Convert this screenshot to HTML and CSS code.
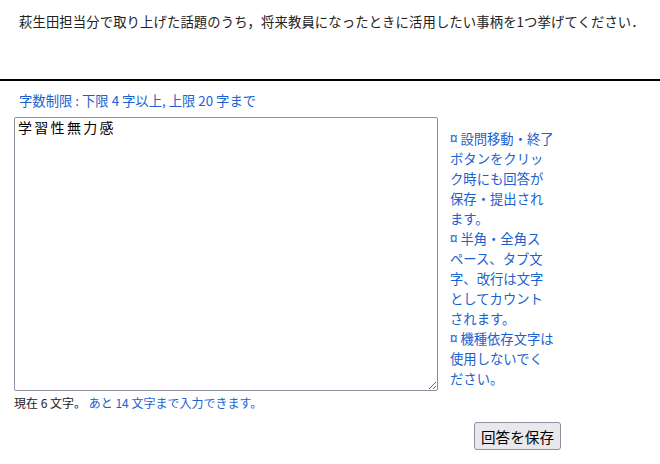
FILE: index.html
```html
<!DOCTYPE html>
<html lang="ja">
<head>
  <meta charset="utf-8">
  <title>回答</title>
  <link rel="stylesheet" href="styles.css">
</head>
<body>
  <div class="question">萩生田担当分で取り上げた話題のうち，将来教員になったときに活用したい事柄を1つ挙げてください．</div>
  <hr class="divider">
  <form class="answer">
    <div class="limit">字数制限 : 下限 4 字以上, 上限 20 字まで</div>
    <div class="answer-row">
      <div class="editor">
        <textarea class="answer-text" name="answer">学習性無力感</textarea>
        <div class="count">現在 6 文字。 <span class="remain">あと 14 文字まで入力できます。</span></div>
      </div>
      <div class="notes">
        <div>¤ 設問移動・終了ボタンをクリック時にも回答が保存・提出されます。</div>
        <div>¤ 半角・全角スペース、タブ文字、改行は文字としてカウントされます。</div>
        <div>¤ 機種依存文字は使用しないでください。</div>
      </div>
    </div>
    <div class="actions">
      <button type="button" class="save">回答を保存</button>
    </div>
  </form>
</body>
</html>
```

FILE: styles.css
```css
/* basic layout */
body {
  margin: 0;
  font-family: "Noto Sans CJK JP", sans-serif;
  font-size: 13.33px;
  color: #222;
}

.question {
  padding: 12px 0 0 19px;
  line-height: 20px;
  height: 67px;
  letter-spacing: 0.12px;
}

.divider {
  margin: 0;
  border: none;
  border-top: 2px solid #000;
}

/* answer area */
.answer {
  padding: 11px 0 0 14px;
}

.limit {
  padding-left: 5px;
  font-size: 13.33px;
  line-height: 18px;
  color: #1a62d0;
}

.answer-row {
  display: flex;
  gap: 12px;
  margin-top: 7px;
}

.answer-text {
  display: block;
  width: 424px;
  height: 274px;
  box-sizing: border-box;
  margin: 0;
  padding: 1px 3px;
  border: 1px solid #8f8f9d;
  border-radius: 2px;
  font-family: "Noto Sans CJK JP", monospace;
  font-size: 14px;
  letter-spacing: 2.3px;
  line-height: 17px;
  color: #000;
}

.count {
  margin-top: 4px;
  font-size: 12px;
  line-height: 16px;
  color: #222;
}

.remain {
  color: #1a62d0;
}

.notes {
  width: 105px;
  margin-top: 12px;
  line-height: 20px;
  line-break: strict;
  color: #1a62d0;
}

/* save button */
.actions {
  padding: 11px 0 0 460px;
}

.save {
  height: 28px;
  padding: 0 6px;
  border: 1px solid #8f8f9d;
  border-radius: 3px;
  background-color: #e9e9ed;
  font-family: "Noto Sans CJK JP", sans-serif;
  font-size: 14.6px;
  color: #000;
}
```
